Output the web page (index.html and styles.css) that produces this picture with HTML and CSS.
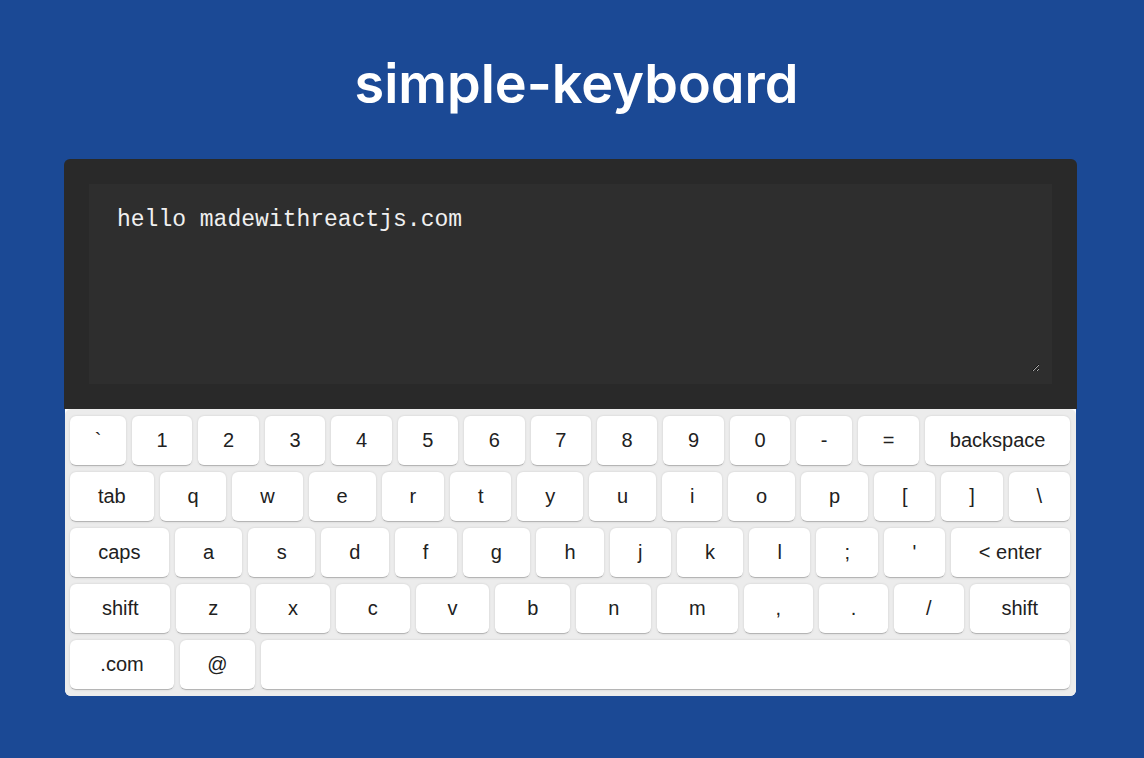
FILE: index.html
```
<!doctype html>
<html lang="en">
    <head>
        <meta charset="UTF-8" />
        <meta name="viewport" content="width=device-width, initial-scale=1.0" />
        <title>simple-keyboard</title>
        <link rel="stylesheet" href="styles.css">
    </head>
    <body>
        <main class="demo">
            <h1 class="logo">simple-keyboard</h1>

            <div class="screen">
                <textarea class="input" aria-label="Keyboard input" spellcheck="false">hello madewithreactjs.com</textarea>
            </div>

            <div class="keyboard-frame">
                <div class="keyboard">
                    <div class="row">
                        <button type="button" class="key">`</button>
                        <button type="button" class="key">1</button>
                        <button type="button" class="key">2</button>
                        <button type="button" class="key">3</button>
                        <button type="button" class="key">4</button>
                        <button type="button" class="key">5</button>
                        <button type="button" class="key">6</button>
                        <button type="button" class="key">7</button>
                        <button type="button" class="key">8</button>
                        <button type="button" class="key">9</button>
                        <button type="button" class="key">0</button>
                        <button type="button" class="key">-</button>
                        <button type="button" class="key">=</button>
                        <button type="button" class="key">backspace</button>
                    </div>
                    <div class="row">
                        <button type="button" class="key">tab</button>
                        <button type="button" class="key">q</button>
                        <button type="button" class="key">w</button>
                        <button type="button" class="key">e</button>
                        <button type="button" class="key">r</button>
                        <button type="button" class="key">t</button>
                        <button type="button" class="key">y</button>
                        <button type="button" class="key">u</button>
                        <button type="button" class="key">i</button>
                        <button type="button" class="key">o</button>
                        <button type="button" class="key">p</button>
                        <button type="button" class="key">[</button>
                        <button type="button" class="key">]</button>
                        <button type="button" class="key">\</button>
                    </div>
                    <div class="row">
                        <button type="button" class="key">caps</button>
                        <button type="button" class="key">a</button>
                        <button type="button" class="key">s</button>
                        <button type="button" class="key">d</button>
                        <button type="button" class="key">f</button>
                        <button type="button" class="key">g</button>
                        <button type="button" class="key">h</button>
                        <button type="button" class="key">j</button>
                        <button type="button" class="key">k</button>
                        <button type="button" class="key">l</button>
                        <button type="button" class="key">;</button>
                        <button type="button" class="key">'</button>
                        <button type="button" class="key">&lt; enter</button>
                    </div>
                    <div class="row">
                        <button type="button" class="key">shift</button>
                        <button type="button" class="key">z</button>
                        <button type="button" class="key">x</button>
                        <button type="button" class="key">c</button>
                        <button type="button" class="key">v</button>
                        <button type="button" class="key">b</button>
                        <button type="button" class="key">n</button>
                        <button type="button" class="key">m</button>
                        <button type="button" class="key">,</button>
                        <button type="button" class="key">.</button>
                        <button type="button" class="key">/</button>
                        <button type="button" class="key">shift</button>
                    </div>
                    <div class="row">
                        <button type="button" class="key key-com">.com</button>
                        <button type="button" class="key key-at">@</button>
                        <button type="button" class="key" aria-label="space"></button>
                    </div>
                </div>
            </div>
        </main>
    </body>
</html>
```
FILE: styles.css
```
* {
    box-sizing: border-box;
}

body {
    margin: 0;
    background: #1b4995;
    font-family: "Liberation Sans", Arial, sans-serif;
}

.demo {
    padding: 48px 67px 48px 64px;
}

.logo {
    margin: 0 0 39px;
    padding-left: 12px;
    color: #ffffff;
    font-family: Inter, sans-serif;
    font-size: 54px;
    font-weight: 600;
    line-height: 72px;
    text-align: center;
    /* single-storey a, square dots */
    font-feature-settings: "cv11", "ss07";
}

.screen {
    padding: 25px;
    background: #292929;
    border-radius: 6px 6px 0 0;
}

.input {
    display: block;
    width: 100%;
    height: 200px;
    margin: 0;
    padding: 10px 16px;
    border: 12px solid #2e2e2e;
    outline: none;
    background: #2e2e2e;
    color: #f0f0f0;
    color-scheme: dark;
    font-family: "Courier New", "Liberation Mono", monospace;
    font-size: 23px;
    line-height: 28px;
    resize: both;
}

.keyboard-frame {
    margin: 0 1px;
    background: #ffffff;
    border-radius: 0 0 6px 6px;
}

.keyboard {
    display: flex;
    flex-direction: column;
    gap: 6px;
    padding: 7px 6px 6px 5px;
    background: #ececec;
    border-radius: 6px;
}

.row {
    display: flex;
    gap: 6px;
}

.key {
    flex: 1 1 auto;
    height: 50px;
    padding: 0 6px;
    border: 0;
    border-bottom: 1px solid #b5b5b5;
    border-radius: 6px;
    background: #ffffff;
    box-shadow: 0 0 3px -1px rgba(0, 0, 0, 0.3);
    color: #212121;
    font-family: inherit;
    font-size: 20px;
    cursor: pointer;
}

.key-com {
    max-width: 104px;
}

.key-at {
    max-width: 75px;
}
```
